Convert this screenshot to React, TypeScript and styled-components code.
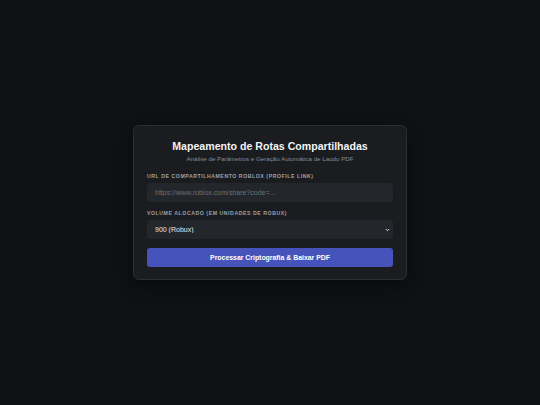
import React from 'react';
import styled, {createGlobalStyle} from 'styled-components';

const Global = createGlobalStyle`
	html, body {
		margin: 0;
		padding: 0;
		background: #0f1114;
		font-family: "Liberation Sans", Arial, sans-serif;
	}
`;

const Page = styled.div`
	width: 540px;
	height: 405px;
	display: flex;
	align-items: center;
	justify-content: center;
`;

const Card = styled.form`
	width: 246px;
	padding: 14px 13px 12px 13px;
	background: #1a1c20;
	border: 1px solid #2a2d33;
	border-radius: 6px;
	box-shadow: 0 6px 18px rgba(0, 0, 0, 0.45);
	display: flex;
	flex-direction: column;
`;

const Title = styled.h1`
	margin: 0;
	text-align: center;
	color: #f2f3f5;
	font-size: 10.6px;
	font-weight: 700;
	line-height: 13px;
`;

const Subtitle = styled.p`
	margin: 2px 0 10px;
	text-align: center;
	color: #868b94;
	font-size: 6.2px;
	line-height: 8px;
`;

const Field = styled.div`
	display: flex;
	flex-direction: column;
	margin-bottom: 8px;
`;

const Label = styled.label`
	color: #9ca1aa;
	font-size: 5.2px;
	line-height: 7px;
	font-weight: 700;
	letter-spacing: 0.55px;
	text-transform: uppercase;
	margin-bottom: 3px;
`;

const Input = styled.input`
	box-sizing: border-box;
	height: 19px;
	width: 100%;
	border: none;
	border-radius: 3px;
	background: #23262b;
	color: #e6e7ea;
	font-family: inherit;
	font-size: 7px;
	padding: 0 8px;
	outline: none;
	display: block;

	&::placeholder {
		color: #6c717a;
	}
`;

const SelectWrap = styled.div`
	position: relative;
`;

const Select = styled.select`
	box-sizing: border-box;
	display: block;
	height: 19px;
	width: 100%;
	border: none;
	border-radius: 3px;
	background: #23262b;
	color: #e6e7ea;
	font-family: inherit;
	font-size: 7px;
	font-weight: 400;
	padding: 0 8px;
	outline: none;
	appearance: none;
	-webkit-appearance: none;
`;

const Chevron = styled.svg`
	position: absolute;
	right: 3px;
	top: 8px;
	width: 5px;
	height: 4px;
	pointer-events: none;
`;

const Button = styled.button`
	height: 19px;
	margin-top: 1px;
	border: none;
	border-radius: 3px;
	background: #4553bb;
	color: #ffffff;
	font-family: inherit;
	font-size: 6.9px;
	font-weight: 700;
	cursor: pointer;
`;

export default function App() {
	return (
		<>
			<Global/>
			<Page>
				<Card onSubmit={e => e.preventDefault()}>
					<Title>Mapeamento de Rotas Compartilhadas</Title>
					<Subtitle>Análise de Parâmetros e Geração Automática de Laudo PDF</Subtitle>
					<Field>
						<Label>URL de Compartilhamento Roblox (Profile Link)</Label>
						<Input placeholder="https://www.roblox.com/share?code=..."/>
					</Field>
					<Field>
						<Label>Volume Alocado (em unidades de Robux)</Label>
						<SelectWrap>
							<Select defaultValue="900">
								<option value="900">900 (Robux)</option>
							</Select>
							<Chevron viewBox="0 0 10 8">
								<path d="M1.5 2 L5 5.5 L8.5 2" fill="none" stroke="#d8dade" strokeWidth="2"/>
							</Chevron>
						</SelectWrap>
					</Field>
					<Button type="submit">Processar Criptografia &amp; Baixar PDF</Button>
				</Card>
			</Page>
		</>
	);
}
